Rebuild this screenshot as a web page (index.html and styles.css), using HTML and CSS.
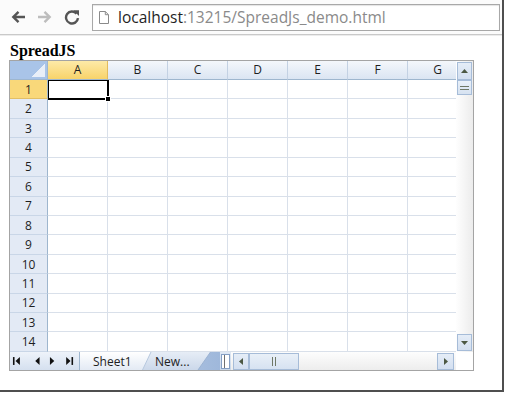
FILE: index.html
```html
<!DOCTYPE html>
<html lang="en">
<head>
    <meta charset="UTF-8">
    <title>SpreadJs demo</title>
    <link rel="stylesheet" href="styles.css">
</head>
<body>

<div class="window">
    <div class="toolbar">
        <svg class="tool-icon" width="16" height="14" viewBox="0 0 16 14">
            <path d="M15 7H3.5M8.5 1.8L3.3 7l5.2 5.2" fill="none" stroke="#555" stroke-width="2.4"/>
        </svg>
        <svg class="tool-icon" width="16" height="14" viewBox="0 0 16 14">
            <path d="M1 7h11.5M7.5 1.8L12.7 7l-5.2 5.2" fill="none" stroke="#bdbdbd" stroke-width="2.4"/>
        </svg>
        <svg class="tool-icon reload" width="16" height="16" viewBox="0 0 16 16">
            <path d="M12.6 4.6A6 6 0 1 0 14 9.2" fill="none" stroke="#555" stroke-width="2.4"/>
            <path d="M9.2 1.2H15V7Z" fill="#555"/>
        </svg>
        <div class="omnibox">
            <svg class="page-icon" width="10" height="13" viewBox="0 0 10 13">
                <path d="M0.5 0.5H6.3L9.5 3.7V12.5H0.5Z M6.3 0.5V3.7H9.5" fill="#fff" stroke="#8a8a8a"/>
            </svg>
            <span class="url"><span class="host">localhost</span>:13215/SpreadJs_demo.html</span>
        </div>
    </div>

    <div class="page">
        <div class="title">SpreadJS</div>

        <div class="sheet">
            <div class="grid">
                <div class="corner"></div>
                <div class="col-heads">
                    <div class="col-head sel">A</div>
                    <div class="col-head">B</div>
                    <div class="col-head">C</div>
                    <div class="col-head">D</div>
                    <div class="col-head">E</div>
                    <div class="col-head">F</div>
                    <div class="col-head">G</div>
                </div>
                <div class="row-heads">
                    <div class="row-head sel">1</div>
                    <div class="row-head">2</div>
                    <div class="row-head">3</div>
                    <div class="row-head">4</div>
                    <div class="row-head">5</div>
                    <div class="row-head">6</div>
                    <div class="row-head">7</div>
                    <div class="row-head">8</div>
                    <div class="row-head">9</div>
                    <div class="row-head">10</div>
                    <div class="row-head">11</div>
                    <div class="row-head">12</div>
                    <div class="row-head">13</div>
                    <div class="row-head">14</div>
                </div>
                <div class="cells">
                    <div class="row"></div>
                    <div class="row"></div>
                    <div class="row"></div>
                    <div class="row"></div>
                    <div class="row"></div>
                    <div class="row"></div>
                    <div class="row"></div>
                    <div class="row"></div>
                    <div class="row"></div>
                    <div class="row"></div>
                    <div class="row"></div>
                    <div class="row"></div>
                    <div class="row"></div>
                    <div class="row"></div>
                    <div class="active-cell"><span class="fill-handle"></span></div>
                </div>
            </div>

            <div class="vscroll">
                <div class="sb-btn">
                    <svg width="7" height="4" viewBox="0 0 7 4"><path d="M0 4L3.5 0L7 4Z" fill="#4c5843"/></svg>
                </div>
                <div class="sb-thumb v">
                    <svg width="9" height="4" viewBox="0 0 9 4"><path d="M0 0.5H9M0 3.5H9" stroke="#6f7866"/></svg>
                </div>
                <div class="sb-btn down">
                    <svg width="7" height="4" viewBox="0 0 7 4"><path d="M0 0L3.5 4L7 0Z" fill="#4c5843"/></svg>
                </div>
            </div>

            <div class="tabbar">
                <svg class="tab-nav" width="70" height="18" viewBox="0 0 70 18">
                    <rect x="3" y="5" width="1.6" height="8" fill="#111"/>
                    <path d="M10 5L5.6 9L10 13Z" fill="#111"/>
                    <path d="M30 5L25.6 9L30 13Z" fill="#111"/>
                    <path d="M40.5 5L44.9 9L40.5 13Z" fill="#111"/>
                    <path d="M57 5L61.4 9L57 13Z" fill="#111"/>
                    <rect x="62.4" y="5" width="1.6" height="8" fill="#111"/>
                </svg>
                <svg class="tabs" width="140" height="18" viewBox="0 0 140 18">
                    <defs>
                        <linearGradient id="tab-active" x1="0" y1="0" x2="0" y2="1">
                            <stop offset="0" stop-color="#ffffff"/>
                            <stop offset="1" stop-color="#e3eaf4"/>
                        </linearGradient>
                        <linearGradient id="tab-other" x1="0" y1="0" x2="0" y2="1">
                            <stop offset="0" stop-color="#e6edf6"/>
                            <stop offset="1" stop-color="#cbd8ea"/>
                        </linearGradient>
                        <linearGradient id="tab-strip" x1="0" y1="0" x2="1" y2="0">
                            <stop offset="0" stop-color="#c3d4ea"/>
                            <stop offset="1" stop-color="#9fb8db"/>
                        </linearGradient>
                    </defs>
                    <rect width="140" height="18" fill="url(#tab-strip)"/>
                    <path d="M60 0H130.5L118 18H55Z" fill="url(#tab-other)"/>
                    <path d="M130.5 0L118 18" stroke="#9cb3d2"/>
                    <path d="M0 0H71L62.5 18H0Z" fill="url(#tab-active)"/>
                    <path d="M71 0L62.5 18" stroke="#b7c8de"/>
                    <text x="13" y="14" class="tab-label">Sheet1</text>
                    <text x="75" y="14" class="tab-label">New...</text>
                </svg>
                <div class="tab-split"><span class="split-box"></span></div>
                <div class="hscroll">
                    <div class="sb-btn h">
                        <svg width="4" height="7" viewBox="0 0 4 7"><path d="M4 0L0 3.5L4 7Z" fill="#4c5843"/></svg>
                    </div>
                    <div class="sb-thumb h">
                        <svg width="4" height="9" viewBox="0 0 4 9"><path d="M0.5 0V9M3.5 0V9" stroke="#6f7866"/></svg>
                    </div>
                    <div class="sb-track"></div>
                    <div class="sb-btn h wide">
                        <svg width="4" height="7" viewBox="0 0 4 7"><path d="M0 0L4 3.5L0 7Z" fill="#4c5843"/></svg>
                    </div>
                </div>
            </div>
            <div class="scroll-corner"></div>
        </div>
    </div>
</div>

</body>
</html>
```

FILE: styles.css
```css
* {
    box-sizing: border-box;
    margin: 0;
    padding: 0;
}

body {
    background: #fff;
    font-family: "Open Sans", Arial, sans-serif;
}

.window {
    width: 504px;
    height: 392px;
    border-right: 2px solid #4f4f4f;
    border-bottom: 2px solid #4f4f4f;
    overflow: hidden;
}

/* Browser toolbar */
.toolbar {
    height: 35px;
    display: flex;
    align-items: center;
    padding-left: 10px;
    background: #fbfbfb;
    border-bottom: 1px solid #c9c9c9;
    box-shadow: 0 1px 0 #ececec;
}

.tool-icon {
    margin-right: 11px;
    flex: none;
}

.tool-icon.reload {
    margin-right: 12px;
}

.omnibox {
    flex: 1;
    height: 27px;
    margin-right: 2px;
    display: flex;
    align-items: center;
    padding-left: 6px;
    background: #fff;
    border: 1px solid #a8a8a8;
    box-shadow: inset 0 1px 1px #e4e4e4;
}

.page-icon {
    margin-right: 9px;
}

.url {
    font-size: 15.5px;
    color: #8a8a8a;
    white-space: nowrap;
}

.host {
    color: #1f1f1f;
}

/* Page */
.page {
    padding: 6px 0 0 9px;
}

.title {
    font: bold 16px/19px "Liberation Serif", serif;
    padding-left: 1px;
}

.sheet {
    width: 465px;
    height: 311px;
    border: 1px solid #a4a4a4;
    display: grid;
    grid-template-columns: 446px 17px;
    grid-template-rows: 291px 18px;
}

.grid {
    display: grid;
    grid-template-columns: 38px 408px;
    grid-template-rows: 19px 272px;
    overflow: hidden;
    font-size: 12px;
    color: #1e1e1e;
}

.corner {
    position: relative;
    background: #a9c4e8;
    border-right: 1px solid #9eb6ce;
    border-bottom: 1px solid #9eb6ce;
}

.corner::after {
    content: "";
    position: absolute;
    right: 2px;
    bottom: 2px;
    width: 13px;
    height: 13px;
    background: linear-gradient(135deg, transparent 50%, #e9eff8 50%);
}

.col-heads {
    display: flex;
    overflow: hidden;
}

.col-head {
    flex: 0 0 60px;
    line-height: 18px;
    text-align: center;
    background: linear-gradient(#f4f7fb, #dbe5f2);
    border-right: 1px solid #c3d1e3;
    border-bottom: 1px solid #9eb6ce;
}

.col-head.sel {
    background: linear-gradient(#fdeaa8, #f8d36a);
    border-right-color: #e2bb5e;
}

.row-heads {
    display: flex;
    flex-direction: column;
}

.row-head {
    flex: 1;
    display: flex;
    align-items: center;
    justify-content: center;
    background: #e3eaf5;
    border-right: 1px solid #9eb6ce;
    border-bottom: 1px solid #c9d6e7;
}

.row-head.sel {
    background: #f9d87a;
    border-bottom-color: #e2bf66;
}

.cells {
    position: relative;
    display: flex;
    flex-direction: column;
    background: #fff linear-gradient(to left, #d9e0ea 1px, transparent 1px);
    background-size: 60px 100%;
}

.row {
    flex: 1;
    border-bottom: 1px solid #d9e0ea;
}

.active-cell {
    position: absolute;
    left: 0;
    top: 0;
    width: 61px;
    height: 20.4px;
    border: solid #000;
    border-width: 1px 2px 2px 1px;
}

.fill-handle {
    position: absolute;
    right: -4px;
    bottom: -4px;
    width: 6px;
    height: 6px;
    background: #000;
    border: 1px solid #fff;
}

/* Scrollbars */
.vscroll {
    display: flex;
    flex-direction: column;
    padding: 1px 1px 1px 1px;
    background: linear-gradient(to right, #fefefe, #ececec);
}

.sb-btn {
    display: flex;
    align-items: center;
    justify-content: center;
    height: 18px;
    background: linear-gradient(#e5edf7, #d3dff0);
    border: 1px solid #a6bcd8;
}

.sb-btn.down {
    margin-top: auto;
    height: 17px;
}

.sb-thumb {
    display: flex;
    align-items: center;
    justify-content: center;
    background: linear-gradient(#e9f0f8, #d6e2f1);
    border: 1px solid #a6bcd8;
}

.sb-thumb.v {
    height: 15px;
}

.tabbar {
    display: flex;
    background: linear-gradient(#f6f8fb, #e4e9f0);
}

.tab-nav {
    flex: none;
    background: linear-gradient(#eef3fa, #d5e0ef);
    border-right: 1px solid #9eb6ce;
}

.tabs {
    flex: none;
}

.tab-label {
    font-family: "Open Sans", Arial, sans-serif;
    font-size: 12px;
    fill: #1e1e1e;
}

.tab-split {
    width: 11px;
    display: flex;
    align-items: center;
    justify-content: center;
    background: linear-gradient(#dfe8f4, #c8d7ea);
}

.split-box {
    width: 9px;
    height: 15px;
    background: #fff linear-gradient(to right, transparent 2px, #707070 2px, #707070 3px, transparent 3px);
    border: 1px solid #859fc4;
}

.hscroll {
    flex: 1;
    display: flex;
    align-items: center;
    padding: 0 2px;
    background: linear-gradient(#fdfdfd, #ededed);
}

.sb-btn.h {
    width: 16px;
    height: 17px;
}

.sb-btn.h.wide {
    width: 17px;
}

.sb-thumb.h {
    width: 50px;
    height: 17px;
}

.sb-track {
    flex: 1;
}

.scroll-corner {
    background: #fff;
}
```
